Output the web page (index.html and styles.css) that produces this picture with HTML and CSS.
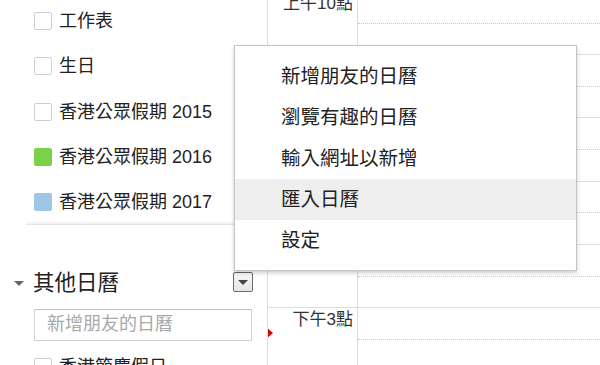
FILE: index.html
```html
<!DOCTYPE html>
<html lang="zh-Hant">
<head>
<meta charset="utf-8">
<title>日曆</title>
<link rel="stylesheet" href="styles.css">
</head>
<body>
<div class="page">
  <aside class="sidebar">
    <ul class="cal-list">
      <li class="cal-item"><span class="box"></span><span class="label">工作表</span></li>
      <li class="cal-item"><span class="box"></span><span class="label">生日</span></li>
      <li class="cal-item"><span class="box"></span><span class="label">香港公眾假期 2015</span></li>
      <li class="cal-item"><span class="box box-green"></span><span class="label">香港公眾假期 2016</span></li>
      <li class="cal-item"><span class="box box-blue"></span><span class="label">香港公眾假期 2017</span></li>
    </ul>
    <div class="list-shadow"></div>
    <div class="section-head">
      <span class="caret"></span>
      <span class="section-title">其他日曆</span>
      <button class="menu-btn" type="button"><span class="btn-caret"></span></button>
    </div>
    <input class="add-input" type="text" placeholder="新增朋友的日曆">
    <ul class="cal-list">
      <li class="cal-item"><span class="box"></span><span class="label">香港節慶假日</span></li>
    </ul>
  </aside>
  <main class="calendar">
    <div class="cal-scroll">
      <div class="time-col">
        <div class="hour"><span class="time-label">上午10點</span></div>
        <div class="hour"><span class="time-label">上午11點</span></div>
        <div class="hour"><span class="time-label">中午12點</span></div>
        <div class="hour"><span class="time-label">下午1點</span></div>
        <div class="hour"><span class="time-label">下午2點</span></div>
        <div class="hour"><span class="time-label">下午3點</span></div>
        <div class="hour"><span class="time-label">下午4點</span></div>
      </div>
      <div class="grid-col">
        <div class="slot"></div>
        <div class="slot"></div>
        <div class="slot"></div>
        <div class="slot"></div>
        <div class="slot"></div>
        <div class="slot"></div>
        <div class="slot"></div>
      </div>
    </div>
    <span class="now-marker"></span>
  </main>
  <ul class="menu">
    <li class="menu-item">新增朋友的日曆</li>
    <li class="menu-item">瀏覽有趣的日曆</li>
    <li class="menu-item">輸入網址以新增</li>
    <li class="menu-item is-active">匯入日曆</li>
    <li class="menu-item">設定</li>
  </ul>
</div>
</body>
</html>
```

FILE: styles.css
```css
* { box-sizing: border-box; }
html, body {
  margin: 0;
  padding: 0;
  background: #fff;
}
body {
  font-family: "Liberation Sans", "Noto Sans CJK TC", sans-serif;
  color: #222;
  width: 600px;
  height: 365px;
  overflow: hidden;
}
.page {
  position: relative;
  display: flex;
  width: 600px;
  height: 365px;
  overflow: hidden;
}

/* Sidebar */
.sidebar {
  width: 267px;
  flex: none;
  display: flex;
  flex-direction: column;
  overflow: hidden;
}
.sidebar > * { flex: none; }
.cal-list {
  list-style: none;
  margin: 0;
  padding: 0 0 0 34px;
}
.cal-list:first-child {
  margin-top: -1.6px;
}
.cal-item {
  height: 45.25px;
  display: flex;
  align-items: center;
}
.box {
  width: 18px;
  height: 18px;
  border: 1px solid #cfcfcf;
  border-radius: 2px;
  flex: none;
  background: #fff;
}
.box-green { background: #7bd148; border-color: #7bd148; }
.box-blue { background: #9fc6e7; border-color: #9fc6e7; }
.label {
  margin-left: 7px;
  font-size: 18px;
  line-height: 22px;
  color: #222;
}
.list-shadow {
  margin-left: 26px;
  width: 241px;
  height: 4px;
  margin-top: -4px;
  background: linear-gradient(to bottom, rgba(0,0,0,0) 0%, rgba(0,0,0,0.05) 60%, rgba(0,0,0,0.13) 100%);
}
.section-head {
  margin-top: 38px;
  height: 40px;
  display: flex;
  align-items: center;
  padding-left: 14px;
}
.caret {
  width: 0;
  height: 0;
  border-left: 5px solid transparent;
  border-right: 5px solid transparent;
  border-top: 5px solid #666;
  margin-top: 1px;
}
.section-title {
  margin-left: 9px;
  font-size: 21.5px;
  line-height: 26px;
  color: #222;
}
.menu-btn {
  margin-left: auto;
  margin-right: 14px;
  width: 20px;
  height: 20px;
  padding: 0;
  border: 1px solid #6a6a6a;
  border-radius: 2px;
  background: linear-gradient(#f8f8f8, #e6e6e6);
  display: flex;
  align-items: center;
  justify-content: center;
  margin-top: -2px;
}
.btn-caret {
  width: 0;
  height: 0;
  border-left: 5px solid transparent;
  border-right: 5px solid transparent;
  border-top: 5px solid #444;
  margin-top: 1px;
}
.add-input {
  display: block;
  margin: 6px 0 0 34px;
  width: 218px;
  height: 32px;
  border: 1px solid #d0d0d0;
  border-top-color: #c0c0c0;
  border-radius: 1px;
  padding: 0 0 0 12px;
  font-family: "Liberation Sans", "Noto Sans CJK TC", sans-serif;
  font-size: 18px;
  color: #222;
  outline: none;
}
.add-input::placeholder { color: #a8a8a8; }
.add-input + .cal-list { margin-top: 3.4px; }

/* Calendar */
.calendar {
  position: relative;
  flex: 1;
  border-left: 1px solid #ddd;
  overflow: hidden;
}
.cal-scroll {
  display: flex;
  margin-top: -9.25px;
}
.time-col {
  width: 90px;
  flex: none;
  border-right: 1px solid #ddd;
}
.hour {
  height: 63.25px;
  border-top: 1px solid #ddd;
  text-align: right;
  padding: 1px 4px 0 0;
}
.time-label {
  font-size: 17px;
  line-height: 21px;
  color: #333;
}
.grid-col {
  flex: 1;
}
.slot {
  height: 63.25px;
  border-top: 1px solid #ddd;
  position: relative;
}
.slot::after {
  content: "";
  position: absolute;
  left: 0;
  right: 0;
  top: 30.75px;
  border-top: 1px dotted #c8c8c8;
}
.now-marker {
  position: absolute;
  left: -1px;
  top: 328px;
  width: 0;
  height: 0;
  border-top: 5.5px solid transparent;
  border-bottom: 5.5px solid transparent;
  border-left: 6px solid #d50000;
}

/* Dropdown menu */
.menu {
  position: absolute;
  left: 234px;
  top: 45px;
  width: 343px;
  margin: 0;
  padding: 9.5px 0;
  list-style: none;
  background: #fff;
  border: 1px solid #c4c4c4;
  box-shadow: 0 2px 4px rgba(0,0,0,0.2);
}
.menu-item {
  height: 41px;
  line-height: 41px;
  padding-left: 46px;
  font-size: 19.5px;
  color: #222;
}
.menu-item.is-active { background: #eee; }
```
